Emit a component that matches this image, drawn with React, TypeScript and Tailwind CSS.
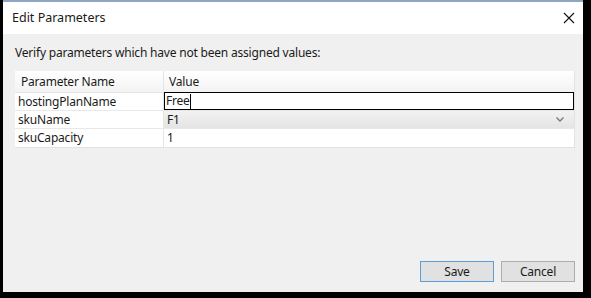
import React from 'react';

const rows = [
  { name: 'hostingPlanName', value: 'Free', kind: 'edit' },
  { name: 'skuName', value: 'F1', kind: 'combo' },
  { name: 'skuCapacity', value: '1', kind: 'text' },
];

const App = () => {
  return (
    <div className="w-[591px] h-[298px] bg-black flex items-start font-['Noto_Sans',sans-serif] text-[12px] tracking-[-0.2px] text-[#1a1a1a]">
      {/* dialog window */}
      <div className="ml-[3px] w-[580px] h-[292px] flex flex-col bg-[#f0f0f0]">
        <div className="h-[2px] bg-[#8fa5c4]" />
        {/* title bar */}
        <div className="h-[32px] bg-white flex items-center justify-between pl-[9px] pr-[6px]">
          <span className="text-[12.5px] tracking-normal">Edit Parameters</span>
          <svg width="12" height="12" viewBox="0 0 12 12" className="mr-[2px]">
            <path d="M1 1 L11 11 M11 1 L1 11" stroke="#111" strokeWidth="1.1" fill="none" />
          </svg>
        </div>

        {/* body */}
        <div className="flex-1 flex flex-col pl-[12px] pr-[8px]">
          <div className="h-[37px] flex items-center pt-[1px]">
            Verify parameters which have not been assigned values:
          </div>

          <div className="bg-white border-r border-b border-[#e3e3e3]">
            <div className="flex h-[22px] bg-gradient-to-b from-white to-[#f3f3f3] border-b border-[#e5e5e5]">
              <div className="w-[149px] pl-[6px] flex items-center border-r border-[#e5e5e5]">Parameter Name</div>
              <div className="flex-1 pl-[5px] flex items-center">Value</div>
            </div>
            {rows.map((row) => (
              <div key={row.name} className="flex h-[18px] border-b border-[#e8e8e8] last:border-b-0">
                <div className="w-[149px] pl-[3px] flex items-center border-r border-[#e5e5e5]">{row.name}</div>
                {row.kind === 'edit' && (
                  <div className="flex-1 -mt-px h-[18px] border-[1.5px] border-black flex items-center pl-[1px] bg-white">
                    <span>{row.value}</span>
                    <span className="w-px h-[15px] bg-black" />
                  </div>
                )}
                {row.kind === 'combo' && (
                  <div className="flex-1 flex items-center justify-between pl-[3px] pr-[10px] bg-gradient-to-b from-[#f2f2f2] to-[#e4e4e4]">
                    <span>{row.value}</span>
                    <svg width="8" height="5" viewBox="0 0 8 5">
                      <path d="M0.5 0.5 L4 4 L7.5 0.5" stroke="#777" strokeWidth="1.3" fill="none" />
                    </svg>
                  </div>
                )}
                {row.kind === 'text' && (
                  <div className="flex-1 pl-[3px] flex items-center">{row.value}</div>
                )}
              </div>
            ))}
          </div>

          <div className="flex-1" />

          <div className="flex justify-end gap-[7px] pb-[10px]">
            <button className="w-[74px] h-[21px] bg-[#e1e1e1] border border-[#5a9fdc] flex items-center justify-center">
              Save
            </button>
            <button className="w-[74px] h-[21px] bg-[#e1e1e1] border border-[#adadad] flex items-center justify-center">
              Cancel
            </button>
          </div>
        </div>
      </div>
    </div>
  );
};

export default App;
